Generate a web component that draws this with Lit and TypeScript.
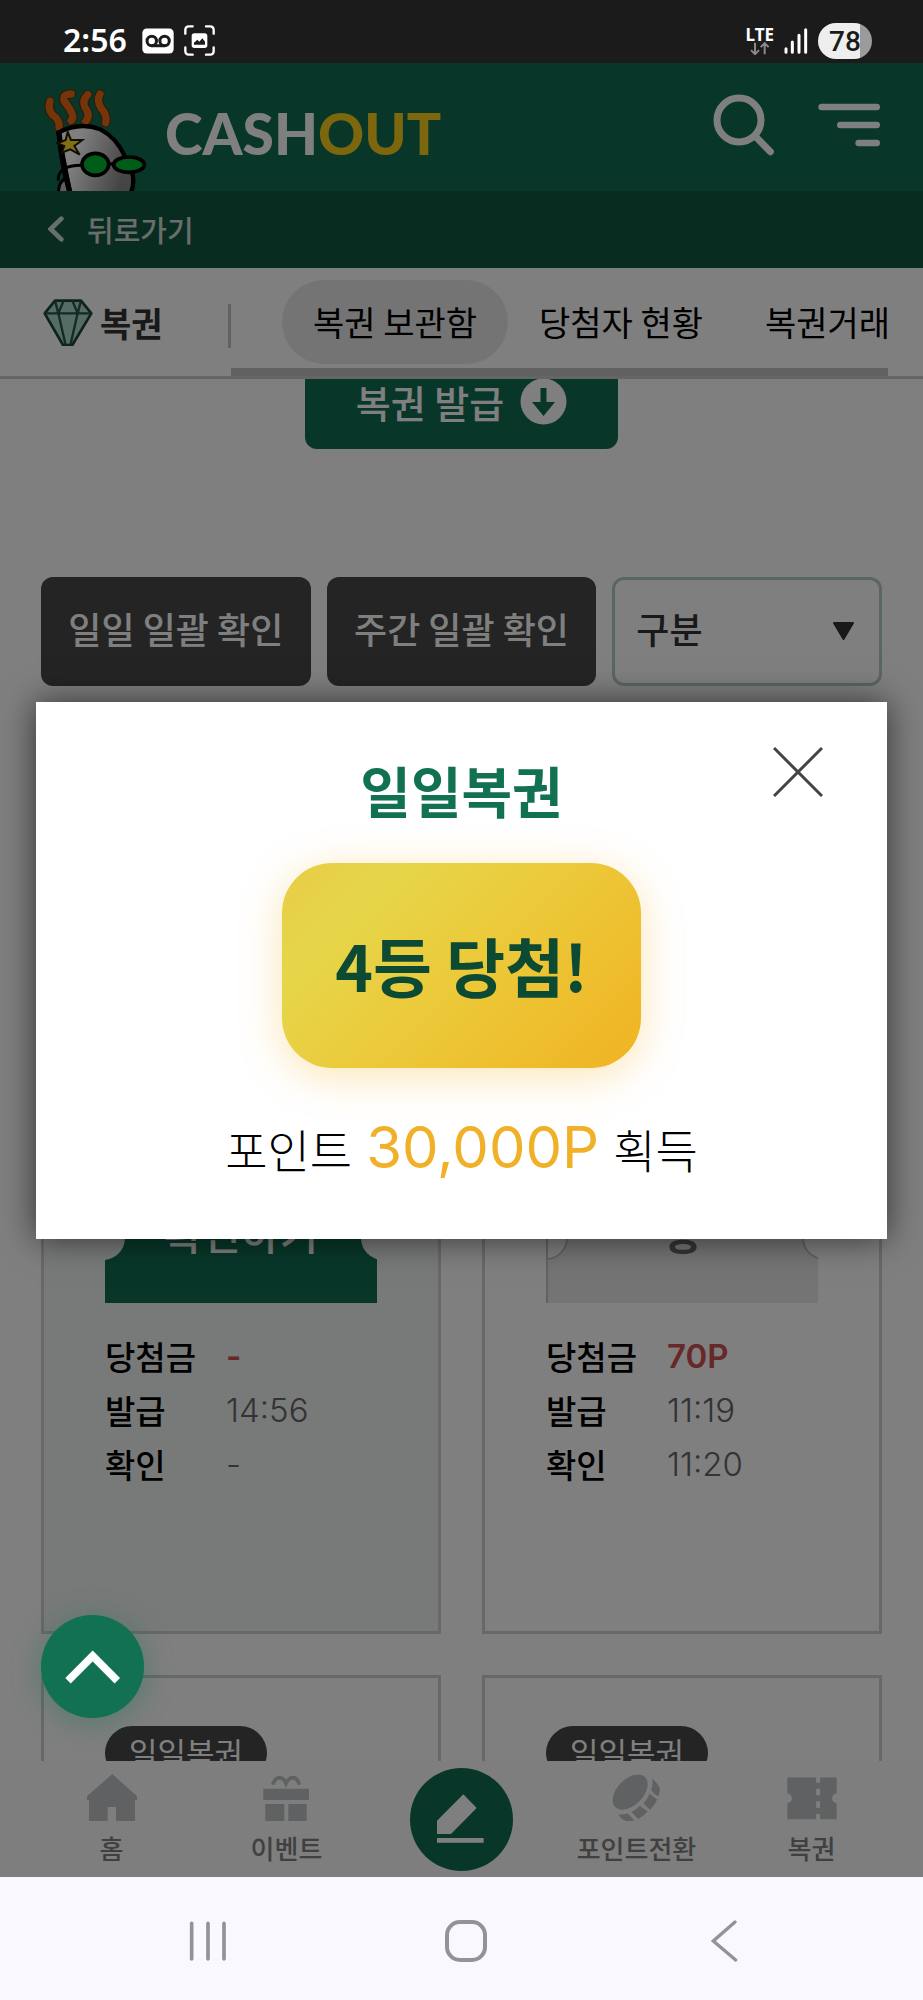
import { LitElement, html, css, svg, nothing } from "lit";
import { customElement, property, state } from "lit/decorators.js";
import { classMap } from "lit/directives/class-map.js";

interface Lottery {
  kind: string;
  action: string;
  opened: boolean;
  prize: string;
  issued: string;
  checked: string;
}

const LOTTERIES: Lottery[] = [
  { kind: "일일복권", action: "확인하기", opened: false, prize: "-", issued: "14:56", checked: "-" },
  { kind: "일일복권", action: "등", opened: true, prize: "70P", issued: "11:19", checked: "11:20" },
  { kind: "일일복권", action: "등", opened: true, prize: "50P", issued: "10:12", checked: "10:13" },
  { kind: "일일복권", action: "등", opened: true, prize: "50P", issued: "09:40", checked: "09:41" },
];

const TABS = ["복권 보관함", "당첨자 현황", "복권거래"];

const homeIcon = svg`<path d="M335 524L410 592V602H403V666H346V623H321V666H265V602H258V592Z" fill="currentColor"/>`;
const giftIcon = svg`<path d="M821 556Q828 535 844 535Q855 537 861 552Q868 537 880 535Q895 535 901 556" fill="none" stroke="currentColor" stroke-width="11"/>
  <path d="M793 568H930V602H793ZM799 614H856V666H799ZM868 614H923V666H868Z" fill="currentColor"/>`;
const coinIcon = svg`<ellipse cx="515" cy="582" rx="65" ry="40" transform="rotate(-45 515 582)" fill="currentColor"/>
  <path d="M583 541Q602 556 607 574L603 594Q588 592 580 574Q586 558 583 541ZM575 586L598 605Q592 622 576 636L556 617Q568 604 575 586ZM545 624L569 642Q556 656 540 665L519 643Q534 636 545 624ZM478 650Q494 652 508 648L527 669Q506 676 490 665Q482 658 478 650Z" fill="currentColor"/>`;
const ticketIcon = svg`<path d="M979 536H1066V552H1078V536H1128V584Q1114 588 1114 599Q1114 610 1128 614V662H1078V646H1066V662H979V614Q993 610 993 599Q993 588 979 584ZM1066 570V590H1078V570ZM1066 608V628H1078V608Z" fill="currentColor" fill-rule="evenodd"/>`;

@customElement("lottery-card")
export class LotteryCard extends LitElement {
  @property({ attribute: false }) item!: Lottery;

  static styles = css`
    :host {
      display: block;
    }
    .card {
      box-sizing: border-box;
      min-height: 907px;
      height: 100%;
      padding: 48px 61px 140px;
      border: 3px solid #d0d0d0;
      background: #ffffff;
    }
    .fresh {
      background: #f0f5f3;
    }
    .kind {
      display: inline-block;
      padding: 0 24px 2px;
      border-radius: 27px;
      background: #484848;
      color: #ffffff;
      font-size: 31px;
      line-height: 52px;
    }
    .ticket {
      position: relative;
      display: block;
      width: 100%;
      height: 130px;
      margin: 341px 0 26px;
      padding: 0 0 14px;
      overflow: hidden;
      border: 0;
      background: #106e54;
      color: #ffffff;
      font: inherit;
      font-size: 42px;
      font-weight: 500;
    }
    .ticket::before,
    .ticket::after {
      content: "";
      position: absolute;
      top: 43px;
      width: 44px;
      height: 44px;
      box-sizing: border-box;
      border-radius: 50%;
      background: #f0f5f3;
    }
    .ticket::before {
      left: -24px;
    }
    .ticket::after {
      right: -28px;
    }
    .opened {
      border-left: 2px solid #c4c4c4;
      background: #e8e8e8;
      color: #6a6a6a;
      font-weight: 700;
    }
    .opened::before,
    .opened::after {
      border: 2px solid #c4c4c4;
      background: #ffffff;
    }
    .facts {
      display: grid;
      grid-template-columns: 121px 1fr;
      margin: 0;
      font-size: 33px;
      line-height: 54px;
    }
    .term {
      font-weight: 500;
      color: #000000;
    }
    .value {
      margin: 0;
      color: #666666;
      font-family: Inter, "Noto Sans CJK KR", sans-serif;
      font-weight: 300;
    }
    .prize {
      color: #cc5050;
      font-weight: 600;
    }
  `;

  render() {
    const { kind, action, opened, prize, issued, checked } = this.item;
    return html`
      <article class=${classMap({ card: true, fresh: !opened })}>
        <span class="kind">${kind}</span>
        <button class=${classMap({ ticket: true, opened })} type="button">${action}</button>
        <dl class="facts">
          <dt class="term">당첨금</dt>
          <dd class="value prize">${prize}</dd>
          <dt class="term">발급</dt>
          <dd class="value">${issued}</dd>
          <dt class="term">확인</dt>
          <dd class="value">${checked}</dd>
        </dl>
      </article>
    `;
  }
}

@customElement("prize-dialog")
export class PrizeDialog extends LitElement {
  static styles = css`
    :host {
      display: block;
    }
    .dialog {
      position: relative;
      display: flex;
      flex-direction: column;
      align-items: center;
      padding: 55px 36px 47px;
      background: #ffffff;
      box-shadow: 0 0 32px rgba(0, 0, 0, 0.6);
    }
    .title {
      margin: 0 0 42px;
      color: #117152;
      font-size: 55px;
      font-weight: 700;
      line-height: 64px;
    }
    .close {
      position: absolute;
      top: 45px;
      right: 64px;
      width: 50px;
      height: 50px;
      padding: 0;
      border: 0;
      background: none;
      cursor: pointer;
    }
    .close svg {
      display: block;
    }
    .badge {
      margin: 0 0 35px;
      padding: 58px 53px 61px;
      border-radius: 50px;
      background: linear-gradient(135deg, #e8cc45 0%, #e6d64a 20%, #ecc838 55%, #f0b323 100%);
      box-shadow: 0 8px 40px rgba(245, 180, 40, 0.35);
      color: #0c4a33;
      font-size: 64px;
      font-weight: 700;
      line-height: 86px;
    }
    .gain {
      display: flex;
      align-items: baseline;
      gap: 14px;
      margin: 0;
      font-size: 46px;
      font-weight: 300;
      line-height: 88px;
      color: #000000;
    }
    .points {
      color: #f0b028;
      font-family: Inter, "Noto Sans CJK KR", sans-serif;
      font-size: 58px;
      font-weight: 400;
    }
  `;

  private close() {
    this.dispatchEvent(new CustomEvent("dismiss"));
  }

  render() {
    return html`
      <section class="dialog" role="dialog" aria-modal="true" aria-labelledby="title">
        <h2 class="title" id="title">일일복권</h2>
        <button class="close" type="button" aria-label="닫기" @click=${this.close}>
          <svg width="50" height="50" viewBox="0 0 50 50">
            <path d="M1 1L49 49M49 1L1 49" stroke="#444" stroke-width="3" />
          </svg>
        </button>
        <p class="badge">4등 당첨!</p>
        <p class="gain"><span>포인트</span> <span class="points">30,000P</span> <span>획득</span></p>
      </section>
    `;
  }
}

@customElement("app-root")
export class AppRoot extends LitElement {
  @state() private dialogOpen = true;
  @state() private activeTab = 0;

  static styles = css`
    :host {
      display: flex;
      flex-direction: column;
      height: 100vh;
      overflow: hidden;
      background: #ffffff;
      color: #000000;
      font-family: "Noto Sans CJK KR", sans-serif;
    }
    button {
      font: inherit;
      cursor: pointer;
    }
    a {
      color: inherit;
      text-decoration: none;
    }
    svg {
      display: block;
      flex: none;
    }

    .status {
      display: flex;
      align-items: center;
      flex: none;
      box-sizing: border-box;
      height: 63px;
      padding: 18px 51px 0 63px;
      background: #1b1b1b;
      color: #ffffff;
      font-family: "Noto Sans", sans-serif;
    }
    .clock {
      margin-right: 15px;
      padding-bottom: 1px;
      font-size: 32px;
      font-weight: 600;
      line-height: 40px;
    }
    .capture {
      margin-left: 10px;
    }
    .signals {
      display: flex;
      align-items: center;
      gap: 10px;
      margin-left: auto;
    }
    .network {
      display: flex;
      flex-direction: column;
      align-items: center;
      font-size: 17px;
      font-weight: 700;
      line-height: 15px;
    }
    .battery {
      box-sizing: border-box;
      width: 54px;
      height: 36px;
      border-radius: 18px;
      background: linear-gradient(90deg, #eeeeee 78%, #9b9b9b 78%);
      color: #1b1b1b;
      font-family: Roboto, sans-serif;
      font-size: 28px;
      font-weight: 500;
      line-height: 38px;
      text-align: center;
    }

    .app {
      position: relative;
      display: flex;
      flex-direction: column;
      flex: 1;
      min-height: 0;
    }
    .header {
      display: flex;
      flex: none;
      align-items: center;
      height: 128px;
      padding: 0 43px;
      background: #106e54;
    }
    .brand {
      display: flex;
      align-items: center;
      align-self: flex-end;
      gap: 18px;
      margin-right: auto;
    }
    .wordmark {
      padding-bottom: 14px;
      color: #ffffff;
      font-family: Lato, sans-serif;
      font-size: 57px;
      font-weight: 900;
      line-height: 60px;
    }
    .gold {
      color: #f8cc1c;
    }
    .icon-button {
      margin: 0 0 5px 43px;
      padding: 0;
      border: 0;
      background: none;
    }

    .back {
      display: flex;
      flex: none;
      align-items: center;
      gap: 23px;
      box-sizing: border-box;
      height: 77px;
      padding: 0 48px 2px;
      background: #105a40;
      color: #d2dcd8;
      font-size: 29px;
      font-weight: 500;
    }

    .subnav {
      display: flex;
      flex: none;
      height: 108px;
      padding: 0 35px 0 43px;
      border-bottom: 3px solid #cacaca;
    }
    .section {
      display: flex;
      align-items: center;
      gap: 7px;
      width: 185px;
      margin: 0;
      color: #333333;
      font-size: 34px;
      font-weight: 700;
    }
    .divider {
      width: 3px;
      height: 44px;
      margin-top: 36px;
      background: #c4c4c4;
    }
    .tabs {
      display: flex;
      flex: 1;
      min-width: 0;
      box-sizing: border-box;
      padding: 12px 0 4px 51px;
      overflow: hidden;
      border-bottom: 8px solid #c0c0c0;
    }
    .tab {
      flex: none;
      padding: 0 31px;
      border: 0;
      border-radius: 42px;
      background: none;
      color: #000000;
      font-size: 34px;
      line-height: 84px;
      white-space: nowrap;
    }
    .active {
      background: #e8e8e8;
    }

    .main {
      flex: 1;
      min-height: 0;
      overflow: hidden;
    }
    .scrolled {
      display: flex;
      flex-direction: column;
      margin-top: -22px;
      padding: 0 41px 41px;
    }
    .issue {
      display: flex;
      align-items: center;
      align-self: center;
      gap: 16px;
      height: 92px;
      margin-bottom: 128px;
      padding: 0 51px 4px;
      border: 0;
      border-radius: 12px;
      background: #106e54;
      color: #ffffff;
      font-size: 38px;
      font-weight: 500;
    }
    .filters {
      display: grid;
      grid-template-columns: repeat(3, 1fr);
      gap: 16px;
      margin-bottom: 41px;
    }
    .bulk {
      height: 109px;
      padding: 0 0 8px;
      border: 0;
      border-radius: 12px;
      background: #484848;
      color: #ffffff;
      font-size: 36px;
      font-weight: 500;
    }
    .picker {
      position: relative;
      display: flex;
    }
    .select {
      flex: 1;
      min-width: 0;
      height: 109px;
      padding: 0 21px 8px;
      border: 3px solid #b4ccc0;
      border-radius: 12px;
      background: transparent;
      color: #333333;
      font: inherit;
      font-size: 36px;
      font-weight: 500;
      appearance: none;
    }
    .caret {
      position: absolute;
      top: 45px;
      right: 28px;
      pointer-events: none;
    }
    .cards {
      display: grid;
      grid-template-columns: repeat(2, 1fr);
      gap: 41px;
    }

    .tabbar {
      display: grid;
      grid-template-columns: repeat(5, 1fr);
      flex: none;
      align-items: center;
      justify-items: center;
      height: 116px;
      padding: 0 24px;
      background: #fcfcfc;
      color: #bec2c6;
    }
    .tabbar-link {
      display: flex;
      flex-direction: column;
      align-items: center;
      gap: 10px;
      white-space: nowrap;
    }
    .tabbar-label {
      color: #808080;
      font-size: 26px;
      font-weight: 500;
      line-height: 34px;
    }
    .write {
      display: grid;
      place-items: center;
      width: 103px;
      height: 103px;
      padding: 0;
      border: 0;
      border-radius: 50%;
      background: #106e54;
    }

    .overlay {
      position: absolute;
      inset: 0;
      display: flex;
      flex-direction: column;
      justify-content: center;
      padding: 0 36px;
      background: rgba(0, 0, 0, 0.5);
    }
    .top {
      position: absolute;
      bottom: 159px;
      left: 41px;
      display: grid;
      place-items: center;
      width: 103px;
      height: 103px;
      padding: 0;
      border: 0;
      border-radius: 50%;
      background: #117152;
      box-shadow: 0 4px 30px rgba(17, 113, 82, 0.4);
    }

    .system {
      display: grid;
      grid-template-columns: repeat(3, 1fr);
      flex: none;
      align-items: center;
      justify-items: center;
      box-sizing: border-box;
      height: 123px;
      padding: 4px 69px 0 79px;
      background: #f9f8ff;
    }
    .key {
      padding: 0;
      border: 0;
      background: none;
    }
  `;

  private renderStatus() {
    return html`
      <div class="status">
        <span class="clock">2:56</span>
        <svg width="32" height="26" viewBox="425 86 95 76">
          <rect x="426" y="87" width="93" height="74" rx="13" fill="#fff" />
          <g fill="none" stroke="#1b1b1b" stroke-width="9">
            <circle cx="454" cy="124" r="14" />
            <circle cx="492" cy="124" r="14" />
            <path d="M454 138H492" />
          </g>
        </svg>
        <svg class="capture" width="31" height="31" viewBox="547 77 93 93">
          <path
            d="M551 103V92Q551 81 562 81H573M613 81H625Q636 81 636 92V103M636 144V155Q636 166 625 166H613M573 166H562Q551 166 551 155V144"
            fill="none" stroke="#fff" stroke-width="7" stroke-linecap="round" />
          <rect x="570" y="102" width="47" height="44" rx="8" fill="#fff" />
          <path d="M577 136V130L587 121L593 127L602 117L610 127V136Z" fill="#1b1b1b" />
        </svg>
        <div class="signals">
          <span class="network">
            LTE
            <svg width="20" height="13" viewBox="864 127 60 38">
              <path d="M879 129V162M867 151L879 163L891 151M908 163V130M896 142L908 130L920 142" fill="none" stroke="#8a8a8a" stroke-width="6" />
            </svg>
          </span>
          <svg width="24" height="26" viewBox="967 83 72 78">
            <path d="M973 145V156M992 125V156M1012 105V156M1032 88V156" stroke="#fff" stroke-width="9" stroke-linecap="round" />
          </svg>
          <span class="battery">78</span>
        </div>
      </div>
    `;
  }

  private renderHeader() {
    return html`
      <header class="header">
        <a class="brand" href="#" aria-label="CASHOUT">
          <svg width="104" height="103" viewBox="130 264 312 309">
            <defs>
              <linearGradient id="skin" x1="0" y1="0" x2="1" y2="0.3">
                <stop offset="0.3" stop-color="#ffffff" />
                <stop offset="1" stop-color="#8a8a8a" />
              </linearGradient>
            </defs>
            <g fill="none" stroke-linecap="round">
              <g stroke="#5c300c" stroke-width="28">
                <path d="M151 304Q144 326 158 344Q182 362 178 382" />
                <path d="M215 282Q186 282 194 304Q212 326 218 344Q222 356 214 362" />
                <path d="M264 284Q246 302 256 322Q274 346 258 364" />
                <path d="M301 282Q290 302 304 324Q324 346 318 368" />
              </g>
              <g stroke="#e66a12" stroke-width="22">
                <path d="M151 304Q144 326 158 344Q182 362 178 382" />
                <path d="M215 282Q186 282 194 304Q212 326 218 344Q222 356 214 362" />
                <path d="M264 284Q246 302 256 322Q274 346 258 364" />
                <path d="M301 282Q290 302 304 324Q324 346 318 368" />
              </g>
            </g>
            <path d="M178 582Q172 548 202 532L216 582Z" fill="#bdbdbd" stroke="#000" stroke-width="9" />
            <path d="M176 398Q240 364 302 388Q350 412 376 470L398 520Q406 552 392 582H212Z" fill="url(#skin)" stroke="#000" stroke-width="13" />
            <path d="M178 398Q186 490 212 582" fill="none" stroke="#000" stroke-width="16" />
            <path d="M176 542Q172 496 246 496" fill="none" stroke="#000" stroke-width="9" />
            <ellipse cx="287" cy="493" rx="40" ry="33" fill="#00b832" stroke="#000" stroke-width="11" />
            <ellipse cx="388" cy="494" rx="46" ry="23" fill="#00b832" stroke="#000" stroke-width="11" />
            <path d="M326 492H342" stroke="#000" stroke-width="10" />
            <path d="M204 396L214 420L248 420L224 438L240 464L212 448L186 458L194 438L174 430L198 420Z" fill="#ffe030" stroke="#221c00" stroke-width="6" />
          </svg>
          <span class="wordmark">CASH<span class="gold">OUT</span></span>
        </a>
        <button class="icon-button" type="button" aria-label="검색">
          <svg width="62" height="62" viewBox="754 280 186 186">
            <g fill="none" stroke="#fff" stroke-width="21" stroke-linecap="round">
              <circle cx="832" cy="358" r="66" />
              <path d="M882 408L926 453" />
            </g>
          </svg>
        </button>
        <button class="icon-button" type="button" aria-label="메뉴">
          <svg width="62" height="44" viewBox="1070 308 186 132">
            <path d="M1081 320H1246M1137 374H1246M1192 428H1246" stroke="#fff" stroke-width="20" stroke-linecap="round" />
          </svg>
        </button>
      </header>
      <a class="back" href="#">
        <svg width="16" height="26" viewBox="145 651 48 78">
          <path d="M185 659L153 690L185 721" fill="none" stroke="currentColor" stroke-width="14" stroke-linecap="round" />
        </svg>
        뒤로가기
      </a>
      <nav class="subnav">
        <h1 class="section">
          <svg width="50" height="48" viewBox="128 116 150 144">
            <path d="M164 124H242L273 162L216 257H188L133 162Z" fill="#a8d8c8" stroke="#1c4438" stroke-width="8" stroke-linejoin="round" />
            <path d="M132 162H274M164 124L174 162L196 258M242 124L232 162L210 258M190 124L174 162M216 124L232 162" fill="none" stroke="#24544a" stroke-width="7" />
          </svg>
          복권
        </h1>
        <span class="divider"></span>
        <div class="tabs" role="tablist">
          ${TABS.map(
            (label, i) => html`
              <button
                class=${classMap({ tab: true, active: i === this.activeTab })}
                type="button"
                role="tab"
                aria-selected=${i === this.activeTab}
                @click=${() => (this.activeTab = i)}
              >${label}</button>
            `
          )}
        </div>
      </nav>
    `;
  }

  private renderMain() {
    return html`
      <main class="main">
        <div class="scrolled">
          <button class="issue" type="button">
            복권 발급
            <svg width="47" height="47" viewBox="0 0 47 47">
              <circle cx="23.500" cy="23.500" r="23" fill="#fff" />
              <path d="M20.500 10H26.500V24H35L23.500 38L12 24H20.500Z" fill="#106e54" />
            </svg>
          </button>
          <div class="filters">
            <button class="bulk" type="button">일일 일괄 확인</button>
            <button class="bulk" type="button">주간 일괄 확인</button>
            <div class="picker">
              <select class="select" aria-label="구분">
                <option>구분</option>
                <option>일일복권</option>
                <option>주간복권</option>
              </select>
              <svg class="caret" width="21" height="18" viewBox="0 0 21 18">
                <path d="M1 1H20L10.500 17Z" fill="#333" stroke="#333" stroke-width="2" stroke-linejoin="round" />
              </svg>
            </div>
          </div>
          <div class="cards">
            ${LOTTERIES.map((item) => html`<lottery-card .item=${item}></lottery-card>`)}
          </div>
        </div>
      </main>
    `;
  }

  private renderTabbarLink(label: string, viewBox: string, icon: unknown) {
    return html`
      <a class="tabbar-link" href="#">
        <svg width="50" height="48" viewBox=${viewBox}>${icon}</svg>
        <span class="tabbar-label">${label}</span>
      </a>
    `;
  }

  private renderTabbar() {
    return html`
      <nav class="tabbar">
        ${this.renderTabbarLink("홈", "259 521 150 144", homeIcon)}
        ${this.renderTabbarLink("이벤트", "786 521 150 144", giftIcon)}
        <button class="write" type="button" aria-label="글쓰기">
          <svg width="49" height="50" viewBox="1317 584 147 150">
            <path d="M1396 585L1436 626L1359 704H1317V664ZM1317 716H1457V730H1317Z" fill="#fff" />
          </svg>
        </button>
        ${this.renderTabbarLink("포인트전환", "458 523 150 148", coinIcon)}
        ${this.renderTabbarLink("복권", "978 523 151 144", ticketIcon)}
      </nav>
    `;
  }

  private renderSystem() {
    return html`
      <div class="system">
        <button class="key" type="button" aria-label="최근 앱">
          <svg width="38" height="40" viewBox="567 960 114 120">
            <path d="M575 967V1074M624 967V1074M672 967V1074" stroke="#929297" stroke-width="11" stroke-linecap="round" />
          </svg>
        </button>
        <button class="key" type="button" aria-label="홈 화면">
          <svg width="42" height="42" viewBox="0 0 42 42">
            <rect x="2" y="2" width="38" height="38" rx="13" fill="none" stroke="#929297" stroke-width="4" />
          </svg>
        </button>
        <button class="key" type="button" aria-label="뒤로">
          <svg width="27" height="42" viewBox="754 957 81 126">
            <path d="M826 963L761 1020L828 1077" fill="none" stroke="#929297" stroke-width="10" stroke-linecap="round" />
          </svg>
        </button>
      </div>
    `;
  }

  render() {
    return html`
      ${this.renderStatus()}
      <div class="app">
        ${this.renderHeader()} ${this.renderMain()} ${this.renderTabbar()}
        ${this.dialogOpen
          ? html`<div class="overlay">
              <prize-dialog @dismiss=${() => (this.dialogOpen = false)}></prize-dialog>
            </div>`
          : nothing}
        <button class="top" type="button" aria-label="맨 위로">
          <svg width="56" height="34" viewBox="198 143 168 102">
            <path d="M207 235L281 161L355 235" fill="none" stroke="#fff" stroke-width="23" />
          </svg>
        </button>
      </div>
      ${this.renderSystem()}
    `;
  }
}
